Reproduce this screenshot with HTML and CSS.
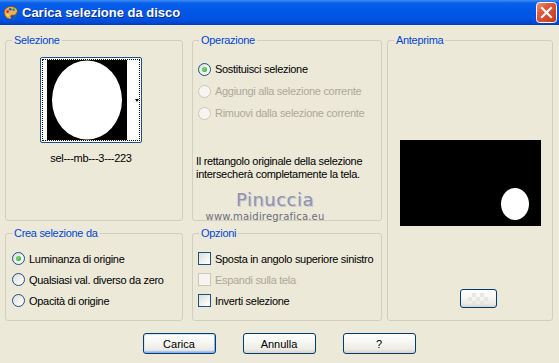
FILE: index.html
```html
<!DOCTYPE html>
<html lang="it">
<head>
  <meta charset="UTF-8" />
  <title>Carica selezione da disco</title>
  <link rel="stylesheet" href="styles.css">
</head>
<body>
  <div class="window">
    <div class="titlebar">
      <svg class="app-icon" width="16" height="16" viewBox="0 0 16 16">
        <path d="M8 1.5C4 1.5 1.2 4.2 1.2 7.6c0 3.4 2.6 6.4 5.8 6.4 1.4 0 1.6-1 1-1.8-.6-.9-.2-1.9 1-1.9h2c2 0 3.6-1.4 3.6-3.6C14.6 3.8 11.8 1.5 8 1.5z" fill="#e8b05a" stroke="#7a4a1a" stroke-width="0.8"/>
        <circle cx="4.6" cy="6.6" r="1.3" fill="#e02020"/>
        <circle cx="7.2" cy="4.3" r="1.3" fill="#2050e0"/>
        <circle cx="10.6" cy="4.8" r="1.3" fill="#20a030"/>
        <circle cx="4.8" cy="10" r="1.2" fill="#f0e020"/>
        <path d="M9.5 15l4.8-8.2 1 .6-4.6 8.3z" fill="#3a7ad0" stroke="#1a3a70" stroke-width="0.5"/>
      </svg>
      <span class="title">Carica selezione da disco</span>
      <span class="close-btn">
        <svg width="21" height="21" viewBox="0 0 21 21">
          <defs>
            <linearGradient id="cg" x1="0" y1="0" x2="1" y2="1">
              <stop offset="0" stop-color="#f09a7c"/>
              <stop offset="0.35" stop-color="#e2583a"/>
              <stop offset="1" stop-color="#c2381a"/>
            </linearGradient>
          </defs>
          <rect x="0.5" y="0.5" width="20" height="20" rx="3" fill="url(#cg)" stroke="#ffffff"/>
          <path d="M6 6l9 9M15 6l-9 9" stroke="#ffffff" stroke-width="2.2" stroke-linecap="square"/>
        </svg>
      </span>
    </div>

    <div class="client">
      <div class="groups">
        <fieldset class="group g-sel">
          <legend>Selezione</legend>
          <div class="thumb">
            <div class="thumb-focus">
              <svg class="thumb-img" width="80" height="80" viewBox="0 0 80 80">
                <rect width="80" height="80" fill="#000"/>
                <ellipse cx="40" cy="40" rx="35" ry="39.5" fill="#fff"/>
              </svg>
              <span class="thumb-arrow"></span>
            </div>
          </div>
          <div class="thumb-name">sel---mb---3---223</div>
        </fieldset>

        <fieldset class="group g-op">
          <legend>Operazione</legend>
          <div class="option"><span class="radio checked"></span>Sostituisci selezione</div>
          <div class="option disabled"><span class="radio"></span>Aggiungi alla selezione corrente</div>
          <div class="option disabled"><span class="radio"></span>Rimuovi dalla selezione corrente</div>
          <p class="note">Il rettangolo originale della selezione<br>intersecherà completamente la tela.</p>
        </fieldset>

        <fieldset class="group g-preview">
          <legend>Anteprima</legend>
          <svg class="preview-img" width="141" height="86" viewBox="0 0 141 86">
            <rect width="141" height="86" fill="#000"/>
            <ellipse cx="115" cy="64" rx="14" ry="16" fill="#fff"/>
          </svg>
          <button class="btn btn-small"><span class="checker"></span></button>
        </fieldset>

        <fieldset class="group g-crea">
          <legend>Crea selezione da</legend>
          <div class="option row"><span class="radio checked"></span>Luminanza di origine</div>
          <div class="option row"><span class="radio"></span>Qualsiasi val. diverso da zero</div>
          <div class="option row"><span class="radio"></span>Opacità di origine</div>
        </fieldset>

        <fieldset class="group g-opz">
          <legend>Opzioni</legend>
          <div class="option row"><span class="check"></span>Sposta in angolo superiore sinistro</div>
          <div class="option row disabled"><span class="check"></span>Espandi sulla tela</div>
          <div class="option row"><span class="check"></span>Inverti selezione</div>
        </fieldset>
      </div>

      <div class="buttons">
        <button class="btn btn-default">Carica</button>
        <button class="btn">Annulla</button>
        <button class="btn">?</button>
      </div>

      <div class="watermark">
        <div class="wm-name">Pinuccia</div>
        <div class="wm-site">www.maidiregrafica.eu</div>
      </div>
    </div>
  </div>
</body>
</html>
```

FILE: styles.css
```css
* {
  box-sizing: border-box;
}

body {
  margin: 0;
  background: #ece9d8;
  font-family: "Liberation Sans", Arial, sans-serif;
  font-size: 11px;
  letter-spacing: -0.3px;
  color: #000;
}

.window {
  width: 559px;
  height: 363px;
  background: #ece9d8;
}

/* barra del titolo */
.titlebar {
  height: 25px;
  display: flex;
  align-items: center;
  padding: 0 2px 1px 3px;
  background: linear-gradient(to bottom, #3d8ef5 0, #0a5fea 3px, #0058e6 10px, #0055e3 18px, #004ad6 22px, #003fc0 25px);
  color: #fff;
}

.app-icon {
  flex: none;
  margin-top: 1px;
}

.title {
  margin-left: 3px;
  font-family: "Liberation Sans", Arial, sans-serif;
  font-weight: bold;
  font-size: 13px;
  letter-spacing: 0;
  text-shadow: 1px 1px 0 #0a2a8a;
}

.close-btn {
  margin-left: auto;
  display: flex;
}

/* area client */
.client {
  position: relative;
  padding: 9px 6px 0 5px;
}

.groups {
  display: grid;
  grid-template-columns: 178px 9px 190px 5px 166px;
  grid-template-rows: 187px 94px;
  row-gap: 6px;
}

.group {
  margin: 0;
  padding: 0;
  min-width: 0;
  border: 1px solid #d0d0bf;
  border-radius: 3px;
  display: flex;
  flex-direction: column;
}

.group legend {
  margin-left: 6px;
  padding: 0 2px;
  line-height: 13px;
  color: #0046d5;
}

.g-sel { grid-column: 1; grid-row: 1; align-items: center; padding: 10px 6px 0 0; }
.g-op { grid-column: 3; grid-row: 1; padding-top: 11px; }
.g-preview { grid-column: 5; grid-row: 1 / 3; align-items: center; padding-top: 93px; }
.g-crea { grid-column: 1; grid-row: 2; padding-top: 8px; }
.g-opz { grid-column: 3; grid-row: 2; padding-top: 8px; }

.g-op .option, .g-opz .option { margin-left: 5px; }
.g-crea .option { margin-left: 6px; }

/* miniatura selezione */
.thumb {
  width: 102px;
  height: 86px;
  padding: 1px;
  border: 1px solid #1c5180;
  border-radius: 2px;
  background: #fff;
}

.thumb-focus {
  height: 100%;
  border: 1px dotted #000;
  display: flex;
  align-items: center;
}

.thumb-img {
  display: block;
  margin-left: 4px;
  align-self: flex-start;
}

.thumb-arrow {
  margin-left: 8px;
  margin-top: 1px;
  width: 0;
  height: 0;
  border-left: 2.5px solid transparent;
  border-right: 2.5px solid transparent;
  border-top: 3px solid #000;
}

.thumb-name {
  margin-top: 9px;
  line-height: 13px;
}

/* opzioni */
.option {
  display: flex;
  align-items: center;
  height: 22px;
  white-space: nowrap;
}

.option.row {
  height: 21px;
}

.option.disabled {
  color: #aca899;
}

.radio, .check {
  flex: none;
  position: relative;
  width: 13px;
  height: 13px;
  margin-right: 4px;
  border: 1px solid #1c5180;
  background: linear-gradient(135deg, #dcdcd7 0%, #f4f4f0 60%, #ffffff 100%);
}

.radio {
  border-radius: 50%;
}

.radio.checked::after {
  content: "";
  position: absolute;
  left: 3px;
  top: 3px;
  width: 5px;
  height: 5px;
  border-radius: 50%;
  background: radial-gradient(circle at 40% 40%, #7ee07a, #21a121);
}

.disabled .radio, .disabled .check {
  border-color: #cac8bb;
  background: #f6f5f0;
}

.note {
  margin: 31px 0 0 3px;
  line-height: 13px;
}

/* anteprima */
.preview-img {
  display: block;
}

/* pulsanti */
.buttons {
  display: flex;
  justify-content: center;
  gap: 27px;
  margin-top: 12px;
}

.btn {
  width: 73px;
  height: 21px;
  padding: 0;
  font-family: "Liberation Sans", Arial, sans-serif;
  font-size: 11px;
  letter-spacing: 0;
  color: #000;
  border: 1px solid #003c74;
  border-radius: 3px;
  background: linear-gradient(to bottom, #ffffff 0%, #f6f6f2 45%, #ecebe5 80%, #d8d3c8 100%);
}

.btn-default {
  box-shadow: inset 1px 1px 0 #cee7ff, inset -1px -1px 0 #8cb4f2, inset 0 -2px 0 #a8c6f4;
}

.btn.btn-small {
  width: 37px;
  height: 19px;
  margin-top: 63px;
  margin-left: 16px;
  display: flex;
  align-items: center;
  justify-content: center;
}

.checker {
  width: 20px;
  height: 12px;
  background:
    linear-gradient(45deg, #e4e3dc 25%, transparent 25%, transparent 75%, #e4e3dc 75%),
    linear-gradient(45deg, #e4e3dc 25%, transparent 25%, transparent 75%, #e4e3dc 75%);
  background-size: 8px 8px;
  background-position: 0 0, 4px 4px;
  opacity: 0.8;
}

/* filigrana */
.watermark {
  position: absolute;
  left: 199px;
  top: 164px;
  width: 132px;
  text-align: center;
  pointer-events: none;
}

.wm-name {
  padding-left: 20px;
  font-family: "DejaVu Sans", sans-serif;
  font-size: 18px;
  line-height: 22px;
  color: #9193ad;
  letter-spacing: 0.5px;
  text-shadow: 1px 1px 0 #c9c8d6;
}

.wm-site {
  font-family: "DejaVu Sans", sans-serif;
  font-size: 10px;
  line-height: 12px;
  color: #6c6c80;
  letter-spacing: 0.2px;
}
```
